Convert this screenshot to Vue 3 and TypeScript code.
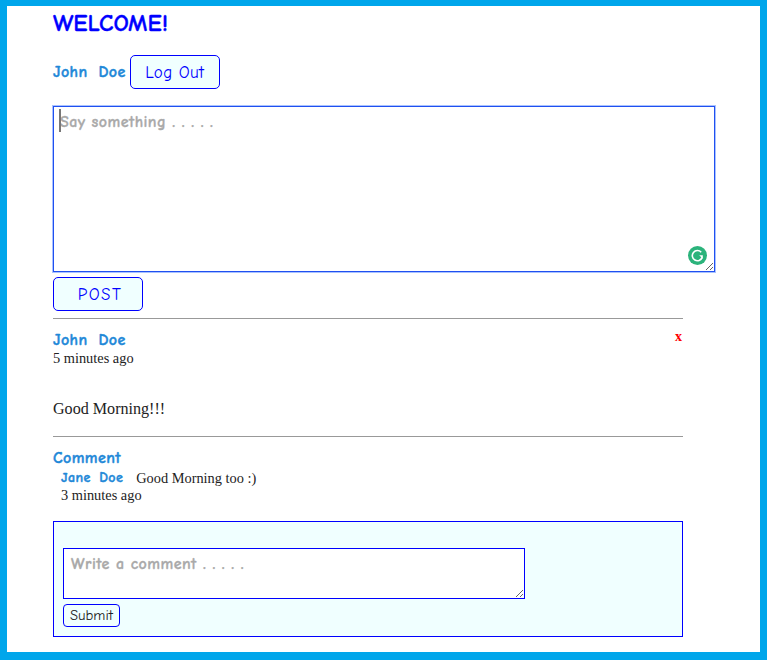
<script setup lang="ts">
// static page, nothing to wire up
</script>

<template>
  <div class="frame">
    <h1 class="title">WELCOME!</h1>
    <div class="user-row">
      <span class="name">John Doe</span>
      <button class="btn logout">Log Out</button>
    </div>

    <div class="post-box">
      <textarea class="post-input" placeholder="Say something . . . . ."></textarea>
      <span class="caret"></span>
      <svg class="grammarly" width="19" height="19" viewBox="0 0 19 19">
        <circle cx="9.5" cy="9.5" r="9.5" fill="#2bb37b" />
        <path d="M13.2 6.2A5.1 5.1 0 1 0 14.2 11.4" fill="none" stroke="#fff" stroke-width="1.6" />
        <path d="M14.8 9.2h-3.6l3.6 3.6z" fill="#fff" />
      </svg>
    </div>
    <button class="btn post-btn">POST</button>

    <div class="feed">
      <hr class="rule" />
      <div class="post-head">
        <div class="name">John Doe</div>
        <span class="remove">x</span>
      </div>
      <div class="time">5 minutes ago</div>
      <p class="body-text">Good Morning!!!</p>
      <hr class="rule" />
      <div class="name comment-label">Comment</div>
      <div class="comment">
        <div class="comment-line">
          <span class="name small">Jane Doe</span>
          <span class="comment-text">Good Morning too :)</span>
        </div>
        <div class="time">3 minutes ago</div>
      </div>
      <form class="reply" @submit.prevent>
        <textarea class="reply-input" placeholder="Write a comment . . . . ."></textarea>
        <button class="submit">Submit</button>
      </form>
    </div>
  </div>
</template>

<style>
html,
body {
  margin: 0;
  background: #fff;
}
</style>

<style scoped>
.frame {
  box-sizing: border-box;
  width: 767px;
  height: 660px;
  border-style: solid;
  border-color: #00a6eb;
  border-width: 6px 7px 8px;
  padding: 0 0 0 46px;
  overflow: hidden;
  font-family: "Liberation Serif", serif;
  color: #222;
}

.title {
  margin: 0;
  padding-top: 3px;
  height: 49px;
  box-sizing: border-box;
  font: bold 24px/28px "Comic Sans MS", "Comic Neue", cursive, "Open Sans", sans-serif;
  -webkit-text-stroke: 0.3px #0000ff;
  color: #0000ff;
}

.user-row {
  display: flex;
  align-items: center;
  gap: 4px;
}

.name {
  font: bold 16px/18px "Comic Sans MS", "Comic Neue", cursive, "Open Sans", sans-serif;
  letter-spacing: 0.4px;
  word-spacing: 4.8px;
  -webkit-text-stroke: 0.4px #1e88d8;
  color: #1e88d8;
}

.name.small {
  font-size: 14px;
  word-spacing: 3px;
}

.btn {
  box-sizing: border-box;
  width: 90px;
  height: 34px;
  padding: 0;
  border: 1px solid #0000ff;
  border-radius: 5px;
  background: #f0ffff;
  color: #0000ff;
  font: 17px "Comic Sans MS", "Comic Neue", cursive, "Open Sans", sans-serif;
}

.logout {
  letter-spacing: 0.4px;
}

.post-box {
  position: relative;
  width: 662px;
  height: 166px;
  margin-top: 17px;
}

.post-input {
  display: block;
  box-sizing: border-box;
  width: 662px;
  height: 166px;
  margin: 0;
  padding: 5px 6px;
  border: 1px solid #2050f0;
  outline: 1px solid #a9c2ff;
  outline-offset: 0;
  font: bold 16px/20px "Comic Sans MS", "Comic Neue", cursive, "Open Sans", sans-serif;
  letter-spacing: 0.43px;
}

.post-input::placeholder,
.reply-input::placeholder {
  color: #a9a9a9;
  opacity: 1;
  -webkit-text-stroke: 0.3px #a9a9a9;
}

.caret {
  position: absolute;
  left: 6px;
  top: 3px;
  width: 2px;
  height: 23px;
  background: #777;
}

.grammarly {
  position: absolute;
  right: 8px;
  bottom: 7px;
}

.post-btn {
  display: block;
  margin-top: 5px;
  padding-left: 4px;
  letter-spacing: 1.5px;
}

.feed {
  width: 630px;
}

.rule {
  height: 0;
  margin: 7px 0 0;
  border: 0;
  border-top: 1px solid #999;
}

.post-head {
  display: flex;
  justify-content: space-between;
  margin-top: 12px;
}

.remove {
  margin-top: -2px;
  padding-right: 1px;
  font: bold 14px/16px "Liberation Serif", serif;
  color: #f00;
}

.time {
  font-size: 14.36px;
  line-height: 17px;
}

.post-head + .time {
  padding-top: 1px;
}

.body-text {
  margin: 33px 0 0;
  font-size: 16.1px;
  line-height: 18px;
}

.feed .body-text + .rule {
  margin-top: 18px;
}

.comment-label {
  margin-top: 12px;
}

.comment {
  margin: 2px 0 0 8px;
}

.comment-line {
  display: flex;
  gap: 13px;
  align-items: center;
  line-height: 17px;
}

.comment-text {
  font-size: 14.36px;
}

.reply {
  box-sizing: border-box;
  height: 116px;
  margin-top: 17px;
  padding: 26px 9px 0;
  border: 1px solid #0000ff;
  background: #f0ffff;
}

.reply-input {
  display: block;
  box-sizing: border-box;
  width: 462px;
  height: 51px;
  margin: 0;
  padding: 5px 7px;
  border: 1px solid #0000ff;
  font: bold 16px/20px "Comic Sans MS", "Comic Neue", cursive, "Open Sans", sans-serif;
  letter-spacing: 0.44px;
}

.submit {
  display: block;
  box-sizing: border-box;
  width: 57px;
  height: 23px;
  margin-top: 5px;
  padding: 0;
  border: 1px solid #0000ff;
  border-radius: 4px;
  background: #f0ffff;
  color: #222;
  font: 14.6px "Comic Sans MS", "Comic Neue", cursive, "Open Sans", sans-serif;
}
</style>
